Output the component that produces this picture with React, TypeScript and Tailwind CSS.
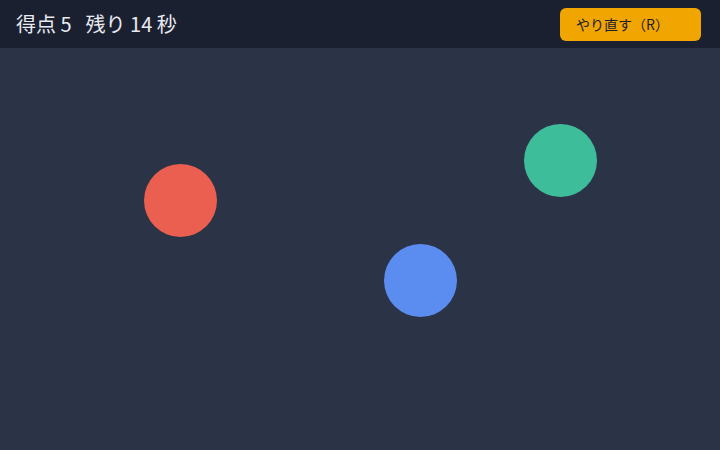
const targets = [
  { x: 180, y: 152, color: "bg-[#ea5f4f]" },
  { x: 560, y: 112, color: "bg-[#3ebd9b]" },
  { x: 420, y: 232, color: "bg-[#5b8df0]" },
];

export default function App() {
  return (
    <div className="flex h-[450px] w-[720px] flex-col bg-[#2b3347] font-['Noto_Sans_CJK_JP','Noto_Sans',sans-serif]">
      <header className="flex h-12 items-center justify-between bg-[#1b2030] pl-4 pr-[19px]">
        <div className="flex items-center gap-[14px] text-xl text-[#e8eaf0]">
          <span>得点 5</span>
          <span>残り 14 秒</span>
        </div>
        <button className="h-[33px] w-[141px] rounded-md bg-[#f0a500] pl-4 text-left text-sm text-[#1b2030]">
          やり直す（R）
        </button>
      </header>
      <main className="relative flex-1">
        {targets.map((t, i) => (
          <div
            key={i}
            className={`absolute h-[73px] w-[73px] rounded-full ${t.color}`}
            style={{ left: t.x - 36, top: t.y - 36 }}
          />
        ))}
      </main>
    </div>
  );
}
